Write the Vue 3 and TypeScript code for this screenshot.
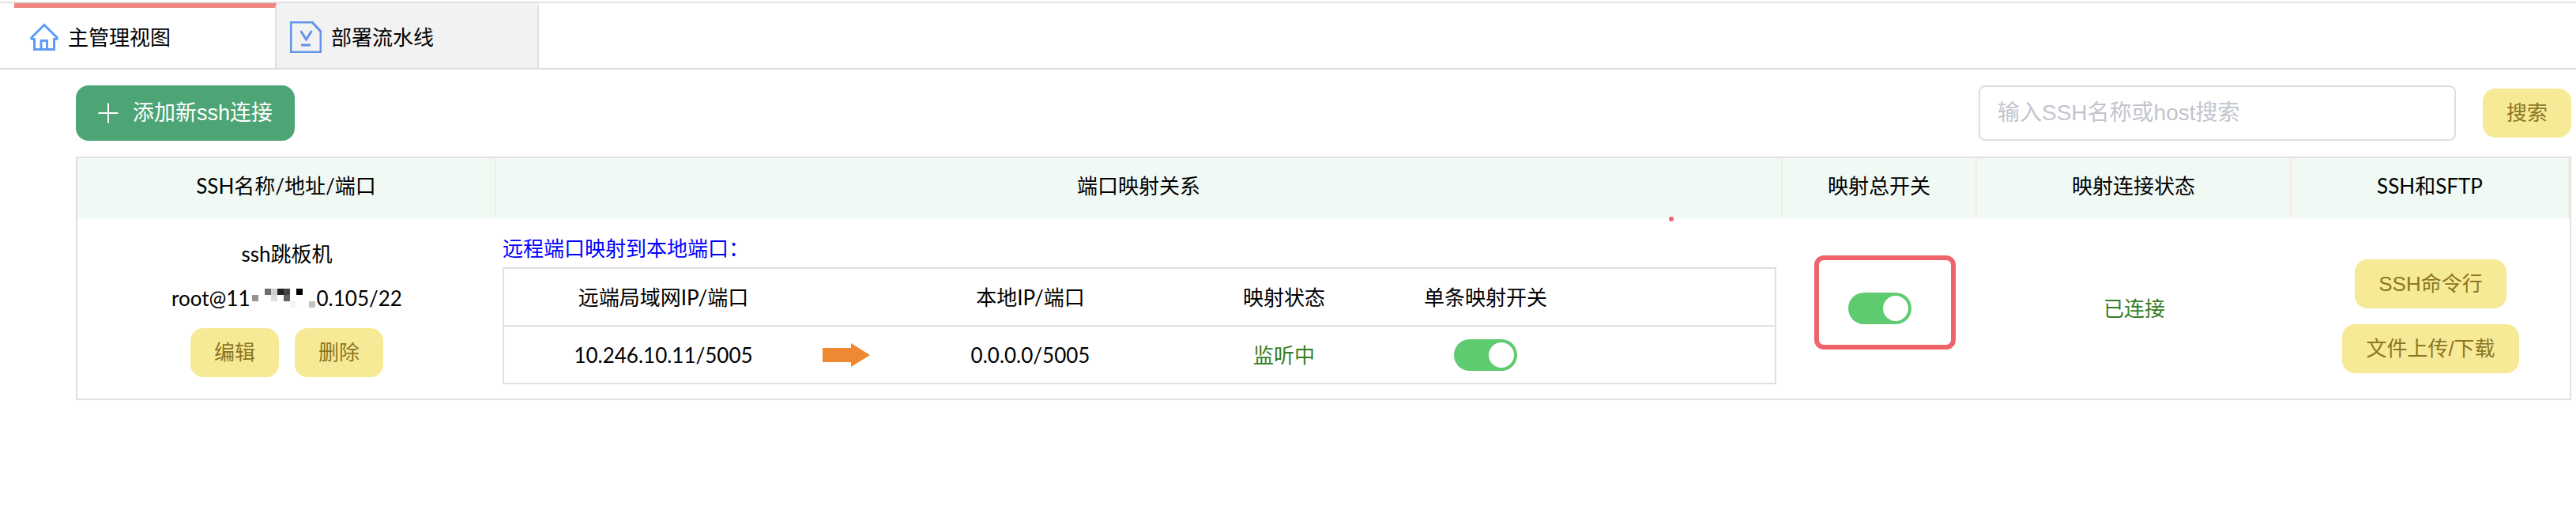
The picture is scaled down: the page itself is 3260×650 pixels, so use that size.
<script setup lang="ts">
import { ref } from 'vue'

interface Mapping {
  remote: string
  local: string
  status: string
  enabled: boolean
}

interface Block {
  x: number
  y: number
  h: number
  fill: string
}

const keyword = ref('')
const masterEnabled = ref(true)
const mappings = ref<Mapping[]>([
  { remote: '10.246.10.11/5005', local: '0.0.0.0/5005', status: '监听中', enabled: true },
])

const maskBlocks: Block[] = [
  { x: 6, y: 8, h: 8, fill: '#949494' },
  { x: 22, y: 0, h: 8, fill: '#6c6c6c' },
  { x: 30, y: 0, h: 8, fill: '#cfcfcf' },
  { x: 30, y: 8, h: 8, fill: '#dcdcdc' },
  { x: 38, y: 0, h: 8, fill: '#222222' },
  { x: 46, y: 0, h: 8, fill: '#444444' },
  { x: 46, y: 8, h: 8, fill: '#626262' },
  { x: 54, y: 16, h: 8, fill: '#f5f5f5' },
  { x: 62, y: 0, h: 8, fill: '#000000' },
  { x: 78, y: 16, h: 8, fill: '#c4c4c4' },
]
</script>

<template>
  <div class="page">
    <nav class="tabs">
      <a class="tab active" href="#main">
        <svg class="home" viewBox="0 0 36 36" aria-hidden="true">
          <path d="M18 2.5 L34 18.5 Q35 20.5 32.5 20.5 H30.5 V33.5 H5.5 V20.5 H3.5 Q1 20.5 2 18.5 Z M14 33.5 V22.5 H21.5 V33.5" />
        </svg>
        <span>主管理视图</span>
      </a>
      <a class="tab" href="#pipeline">
        <svg class="doc" viewBox="0 0 40 40" aria-hidden="true">
          <path d="M1 1 H28 L39 13 V39 H1 Z M13.5 12 L20.5 23 L27.5 12 M14 30 H26" />
        </svg>
        <span>部署流水线</span>
      </a>
    </nav>

    <main class="content">
      <div class="toolbar">
        <button class="add" type="button">
          <svg viewBox="0 0 26 26" aria-hidden="true"><path d="M13 0.5 V25.5 M0.5 13 H25.5" /></svg>
          <span>添加新ssh连接</span>
        </button>
        <form class="search" @submit.prevent>
          <input v-model="keyword" type="text" placeholder="输入SSH名称或host搜索" aria-label="输入SSH名称或host搜索" />
          <button class="soft" type="submit">搜索</button>
        </form>
      </div>

      <table class="grid">
        <colgroup>
          <col class="c-name" />
          <col />
          <col class="c-switch" />
          <col class="c-status" />
          <col class="c-ops" />
        </colgroup>
        <thead>
          <tr>
            <th scope="col">SSH名称/地址/端口</th>
            <th scope="col" class="relation">端口映射关系<i class="dot"></i></th>
            <th scope="col">映射总开关</th>
            <th scope="col">映射连接状态</th>
            <th scope="col">SSH和SFTP</th>
          </tr>
        </thead>
        <tbody>
          <tr>
            <td>
              <div class="host">
                <p>ssh跳板机</p>
                <p class="address">
                  <span>root@11</span>
                  <svg viewBox="4 0 84 24" shape-rendering="crispEdges" aria-hidden="true">
                    <rect v-for="(b, i) in maskBlocks" :key="i" :x="b.x" :y="b.y" width="8" :height="b.h" :fill="b.fill" />
                  </svg>
                  <span>0.105/22</span>
                </p>
                <div class="actions">
                  <button class="soft" type="button">编辑</button>
                  <button class="soft" type="button">删除</button>
                </div>
              </div>
            </td>
            <td class="maps">
              <p class="caption">远程端口映射到本地端口：</p>
              <table class="inner">
                <colgroup>
                  <col class="i-remote" />
                  <col class="i-arrow" />
                  <col class="i-local" />
                  <col class="i-status" />
                  <col class="i-switch" />
                  <col />
                </colgroup>
                <thead>
                  <tr>
                    <th scope="col">远端局域网IP/端口</th>
                    <td></td>
                    <th scope="col">本地IP/端口</th>
                    <th scope="col">映射状态</th>
                    <th scope="col">单条映射开关</th>
                    <td></td>
                  </tr>
                </thead>
                <tbody>
                  <tr v-for="m in mappings" :key="m.remote">
                    <td>{{ m.remote }}</td>
                    <td>
                      <svg class="arrow" viewBox="0 0 60 30" aria-hidden="true"><path d="M0 6 H36 V0 L60 15 L36 30 V24 H0 Z" /></svg>
                    </td>
                    <td>{{ m.local }}</td>
                    <td class="ok">{{ m.status }}</td>
                    <td><input v-model="m.enabled" class="toggle" type="checkbox" aria-label="单条映射开关" /></td>
                    <td></td>
                  </tr>
                </tbody>
              </table>
            </td>
            <td>
              <div class="marked">
                <input v-model="masterEnabled" class="toggle" type="checkbox" aria-label="映射总开关" />
              </div>
            </td>
            <td class="ok">已连接</td>
            <td>
              <div class="ops">
                <button class="soft" type="button">SSH命令行</button>
                <button class="soft" type="button">文件上传/下载</button>
              </div>
            </td>
          </tr>
        </tbody>
      </table>
    </main>
  </div>
</template>

<style>
body {
  background: #fff;
}
</style>

<style scoped>
.page {
  padding-top: 2px;
  color: #000;
  font: 26px/36px Lato, "Noto Sans CJK SC", sans-serif;
}
.page *,
.page *::after {
  box-sizing: border-box;
}
p {
  margin: 0;
}
.tabs {
  display: flex;
  height: 86px;
  padding-left: 18px;
  border-top: 2px solid #e0e0e0;
  border-bottom: 2px solid #e0e0e0;
}
.tab {
  display: flex;
  align-items: center;
  gap: 12px;
  min-width: 332px;
  padding: 0 18px 0 17px;
  border-top: 6px solid #f2f2f2;
  border-right: 2px solid #e0e0e0;
  background: #f2f2f2;
  color: #000;
  text-decoration: none;
}
.tab.active {
  border-top-color: #f08784;
  background: #fff;
  padding-left: 20px;
}
.tab svg {
  fill: none;
  stroke: #5e9cf8;
  stroke-width: 3;
  margin-bottom: 2px;
}
.home {
  width: 36px;
  height: 36px;
}
.doc {
  width: 40px;
  height: 40px;
}
.tab .doc {
  stroke: #6495e8;
}
.tab span {
  padding-bottom: 2px;
}
.content {
  padding: 20px 6px 0 96px;
}
.toolbar {
  display: flex;
  justify-content: space-between;
  align-items: center;
  margin-bottom: 20px;
}
button {
  border: 0;
  cursor: pointer;
  font: 26px/36px "Liberation Sans", "Noto Sans CJK SC", sans-serif;
}
.add {
  display: flex;
  align-items: center;
  gap: 18px;
  height: 70px;
  padding: 0 28px;
  border-radius: 16px;
  background: #4da474;
  color: #fff;
  font-size: 27px;
}
.add svg {
  width: 26px;
  height: 26px;
  fill: none;
  stroke: #fff;
  stroke-width: 2;
}
.search {
  display: flex;
  align-items: center;
  gap: 34px;
}
.search input {
  width: 604px;
  height: 70px;
  padding: 0 22px;
  border: 2px solid #dddde5;
  border-radius: 8px;
  outline: 0;
  background: #fff;
  font: 28px/40px "Liberation Sans", "Noto Sans CJK SC", sans-serif;
}
.search input::placeholder {
  color: #c2c5cd;
  opacity: 1;
}
.soft {
  height: 62px;
  padding: 0 30px;
  border-radius: 16px;
  background: #f7ea97;
  color: #8b7623;
}
.grid {
  width: 100%;
  table-layout: fixed;
  border-collapse: separate;
  border-spacing: 0;
  border: 2px solid #e0e0e0;
  text-align: center;
}
.c-name {
  width: 530px;
}
.c-switch {
  width: 246px;
}
.c-status {
  width: 398px;
}
.c-ops {
  width: 352px;
}
th {
  font-weight: 400;
}
.grid > thead th {
  height: 76px;
  padding: 0 0 6px;
  border-right: 2px solid #f4eee2;
  background: #f1f9f5;
}
.grid > tbody > tr > td {
  padding: 0;
  height: 228px;
  vertical-align: middle;
}
.relation {
  position: relative;
}
.dot {
  position: absolute;
  right: 136px;
  bottom: -4px;
  width: 6px;
  height: 6px;
  border-radius: 50%;
  background: #ee646a;
}
.host {
  display: flex;
  flex-direction: column;
  align-items: center;
  gap: 20px;
}
.address {
  display: flex;
  align-items: center;
}
.address svg {
  width: 84px;
  height: 24px;
}
.actions {
  display: flex;
  gap: 20px;
}
.grid > tbody > tr > .maps {
  padding: 20px 8px 0;
  vertical-align: top;
}
.caption {
  padding-bottom: 6px;
  color: #00f;
  text-align: left;
}
.inner {
  width: 100%;
  table-layout: fixed;
  border-collapse: collapse;
  border: 2px solid #e0e0e0;
}
.inner tr {
  height: 73px;
  border-bottom: 2px solid #e0e0e0;
}
.inner th,
.inner td {
  padding: 0;
  vertical-align: middle;
}
.i-remote {
  width: 404px;
}
.i-arrow {
  width: 60px;
}
.i-local {
  width: 406px;
}
.i-status {
  width: 236px;
}
.i-switch {
  width: 274px;
}
.arrow {
  display: block;
  width: 60px;
  height: 30px;
  fill: #ee8832;
}
.ok {
  color: #377e22;
}
.toggle {
  appearance: none;
  display: block;
  width: 80px;
  height: 40px;
  margin: 0 auto;
  padding: 4px;
  border-radius: 20px;
  background: #c8ccd2;
  cursor: pointer;
}
.toggle::after {
  content: "";
  display: block;
  width: 32px;
  height: 32px;
  border-radius: 50%;
  background: #fff;
}
.toggle:checked {
  background: #5fcb71;
}
.toggle:checked::after {
  margin-left: auto;
}
.marked {
  position: relative;
  width: 80px;
  margin: 0 auto;
}
.marked::after {
  content: "";
  position: absolute;
  top: -47px;
  left: -43px;
  width: 179px;
  height: 119px;
  border: 6px solid #ee646a;
  border-radius: 12px;
  pointer-events: none;
}
.ops {
  display: flex;
  flex-direction: column;
  align-items: center;
  gap: 20px;
  padding-top: 20px;
}
</style>
